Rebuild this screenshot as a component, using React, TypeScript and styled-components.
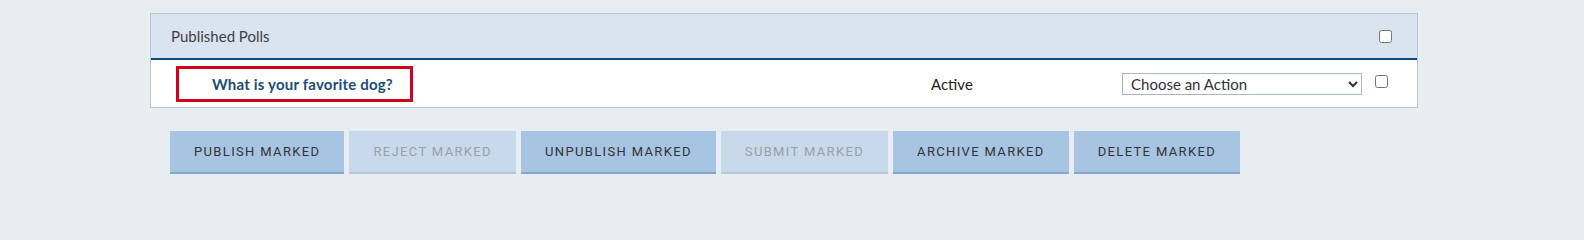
import React from 'react';
import styled, { createGlobalStyle } from 'styled-components';

const GlobalStyle = createGlobalStyle`
  html, body {
    margin: 0;
    padding: 0;
    background: #e8edf2;
    font-family: Lato, 'Noto Sans', sans-serif;
    color: #333;
  }
`;

const Page = styled.main`
  padding: 13px 0 0 150px;
  height: 228px;
  box-sizing: border-box;
  overflow: hidden;
`;

const Panel = styled.section`
  width: 1268px;
  box-sizing: border-box;
  border: 1px solid #b9c6d6;
  background: #fff;
`;

const PanelHeader = styled.header`
  display: flex;
  align-items: center;
  justify-content: space-between;
  height: 44px;
  padding: 0 25px 0 20px;
  background: #dae4f0;
  border-bottom: 2px solid #0d4c7e;
  font-size: 15px;
  color: #3a3f47;
`;

const Check = styled.input.attrs({ type: 'checkbox' })`
  width: 13px;
  height: 13px;
  margin: 0;
  accent-color: #555;
`;

const Row = styled.div`
  display: grid;
  grid-template-columns: 780px 191px 240px 1fr;
  align-items: center;
  height: 47px;
`;

const TitleCell = styled.div`
  padding-left: 25px;
`;

const TitleLink = styled.a`
  display: inline-block;
  box-sizing: border-box;
  width: 237px;
  height: 36px;
  padding: 0 0 0 33px;
  line-height: 30px;
  border: 3px solid #d0021b;
  color: #1b4d7c;
  font-weight: 700;
  font-size: 15px;
  letter-spacing: 0.2px;
  white-space: nowrap;
  text-decoration: none;
`;

const Status = styled.div`
  font-size: 15px;
  color: #222;
`;

const ActionSelect = styled.select`
  width: 240px;
  height: 22px;
  padding: 0 4px;
  border: 1px solid #aab6c4;
  border-radius: 0;
  background: #fff;
  font-family: Lato, 'Noto Sans', sans-serif;
  font-size: 15px;
  color: #333;
`;

const CheckCell = styled.div`
  padding-left: 13px;
  padding-bottom: 5px;
`;

const ButtonBar = styled.div`
  display: flex;
  gap: 5px;
  margin: 23px 0 0 20px;
`;

const ActionButton = styled.button<{ $disabled?: boolean }>`
  height: 43px;
  padding: 0 24px;
  border: none;
  border-bottom: 2px solid ${p => (p.$disabled ? '#b5c8dc' : '#8aa6c6')};
  background: ${p => (p.$disabled ? '#c8d9eb' : '#a7c5e3')};
  color: ${p => (p.$disabled ? '#9aa0a6' : '#333')};
  font-family: Roboto, 'Liberation Sans', sans-serif;
  font-size: 13px;
  letter-spacing: 1.35px;
  text-transform: uppercase;
  cursor: ${p => (p.$disabled ? 'default' : 'pointer')};
`;

const buttons = [
  { label: 'Publish Marked' },
  { label: 'Reject Marked', disabled: true },
  { label: 'Unpublish Marked' },
  { label: 'Submit Marked', disabled: true },
  { label: 'Archive Marked' },
  { label: 'Delete Marked' },
];

export default function App() {
  return (
    <>
      <GlobalStyle />
      <Page>
        <Panel>
          <PanelHeader>
            <span>Published Polls</span>
            <Check />
          </PanelHeader>
          <Row>
            <TitleCell>
              <TitleLink href="#">What is your favorite dog?</TitleLink>
            </TitleCell>
            <Status>Active</Status>
            <ActionSelect defaultValue="">
              <option value="">Choose an Action</option>
            </ActionSelect>
            <CheckCell>
              <Check />
            </CheckCell>
          </Row>
        </Panel>
        <ButtonBar>
          {buttons.map(b => (
            <ActionButton key={b.label} $disabled={b.disabled}>
              {b.label}
            </ActionButton>
          ))}
        </ButtonBar>
      </Page>
    </>
  );
}
